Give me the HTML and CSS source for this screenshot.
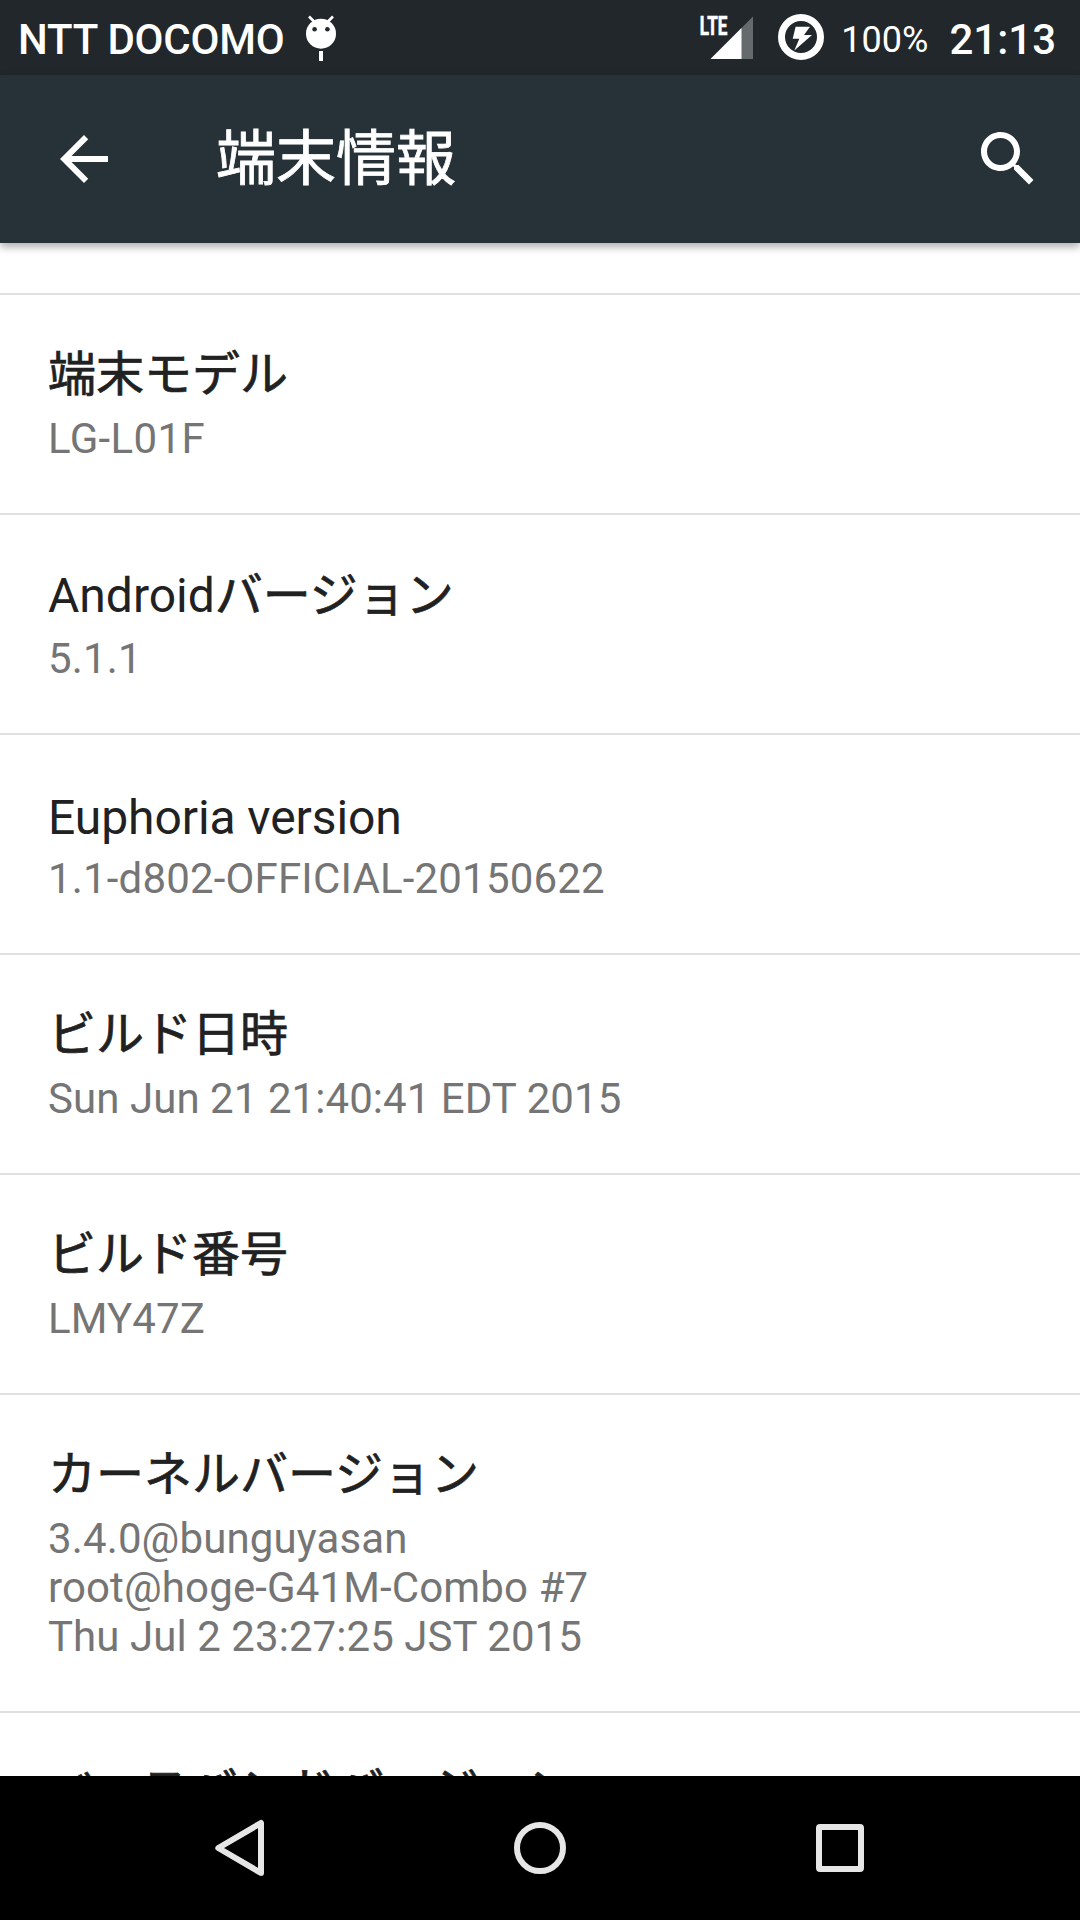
FILE: index.html
```html
<!DOCTYPE html>
<html lang="ja">
<head>
<meta charset="utf-8">
<title>端末情報</title>
<link rel="stylesheet" href="styles.css">
</head>
<body>
<div class="screen">
  <div class="status-bar">
    <span class="carrier">NTT DOCOMO</span>
    <svg class="notif-icon" width="36" height="75" viewBox="303 0 36 75">
      <circle cx="321" cy="33.7" r="15" fill="#fff"/>
      <path d="M309 16.5l6 6M333 16.5l-6 6" stroke="#fff" stroke-width="2.6"/>
      <circle cx="314.6" cy="29.3" r="2.3" fill="#21272b"/>
      <circle cx="327.4" cy="29.3" r="2.3" fill="#21272b"/>
      <path d="M319 51h4v10h-4z" fill="#fff"/>
    </svg>
    <span class="spacer"></span>
    <svg class="signal-icon" width="54" height="75" viewBox="700 0 54 75">
      <path d="M753 16.5V59H710.5z" fill="#656a6d"/>
      <path d="M741.5 28V59H710.5z" fill="#fff"/>
      <text class="lte" x="699.8" y="35.3" textLength="27.5" lengthAdjust="spacingAndGlyphs">LTE</text>
    </svg>
    <svg class="battery-icon" width="46" height="75" viewBox="778 0 46 75">
      <circle cx="801" cy="37" r="19.5" fill="none" stroke="#fff" stroke-width="7"/>
      <path d="M795.6 26.7H810L804 35H812L794.3 50.5L799.3 38.7H792.7z" fill="#fff"/>
    </svg>
    <span class="percent">100%</span>
    <span class="clock">21:13</span>
  </div>
  <header class="app-bar">
    <svg width="72" height="72" viewBox="0 0 24 24" fill="#fff"><path d="M20 11H7.83l5.59-5.59L12 4l-8 8 8 8 1.41-1.41L7.83 13H20v-2z"/></svg>
    <h1 class="page-title">端末情報</h1>
    <svg width="72" height="72" viewBox="0 0 24 24" fill="#fff"><path d="M15.5 14h-.79l-.28-.27C15.41 12.59 16 11.11 16 9.5 16 5.91 13.09 3 9.5 3S3 5.91 3 9.5 5.91 16 9.5 16c1.61 0 3.09-.59 4.23-1.57l.27.28v.79l5 4.99L20.49 19l-4.99-5zm-6 0C7.01 14 5 11.99 5 9.5S7.01 5 9.5 5 14 7.01 14 9.5 11.99 14 9.5 14z"/></svg>
  </header>
  <main class="list">
    <section class="item"><h2 class="title">端末モデル</h2><p class="summary summary-model">LG-L01F</p></section>
    <section class="item"><h2 class="title title-mixed"><span class="latin">Android</span>バージョン</h2><p class="summary">5.1.1</p></section>
    <section class="item"><h2 class="title title-latin">Euphoria version</h2><p class="summary summary-version">1.1-d802-OFFICIAL-20150622</p></section>
    <section class="item"><h2 class="title">ビルド日時</h2><p class="summary summary-date">Sun Jun 21 21:40:41 EDT 2015</p></section>
    <section class="item"><h2 class="title">ビルド番号</h2><p class="summary">LMY47Z</p></section>
    <section class="item"><h2 class="title">カーネルバージョン</h2><p class="summary">3.4.0@bunguyasan<br>root@hoge-G41M-Combo #7<br><span class="summary-date">Thu Jul 2 23:27:25 JST 2015</span></p></section>
    <section class="item"><h2 class="title title-last">ベースバンドバージョン</h2></section>
  </main>
  <nav class="nav-bar">
    <svg width="72" height="72" viewBox="204 1812 72 72"><path d="M261 1823V1873L218.3 1848z"/></svg>
    <svg width="72" height="72" viewBox="504 1812 72 72"><circle cx="540" cy="1848" r="23"/></svg>
    <svg width="72" height="72" viewBox="804 1812 72 72"><rect x="819" y="1827" width="42" height="42" rx="1"/></svg>
  </nav>
</div>
</body>
</html>
```
FILE: styles.css
```css
* { box-sizing: border-box; }
body, h1, h2, p { margin: 0; font-weight: 400; }
svg { display: block; flex: none; }

.screen {
  width: 1080px;
  height: 1920px;
  display: flex;
  flex-direction: column;
  overflow: hidden;
  background: #fff;
  font-family: Roboto, "Noto Sans CJK JP", sans-serif;
}

.status-bar {
  flex: none;
  height: 75px;
  padding: 0 24px 0 18px;
  display: flex;
  background: #21272b;
  color: #fff;
  white-space: nowrap;
}
.carrier, .clock { font-size: 42px; font-weight: 500; line-height: 80px; }
.carrier { letter-spacing: -.2px; }
.notif-icon { margin-left: 18px; }
.spacer { flex: 1; }
.lte { font: 700 26px Roboto, sans-serif; fill: #fff; stroke: #fff; stroke-width: .7px; }
.battery-icon { margin-left: 24px; }
.percent { margin-left: 17px; font-size: 36px; line-height: 80px; }
.clock { margin-left: 21px; }

.app-bar {
  flex: none;
  position: relative;
  z-index: 1;
  height: 168px;
  padding: 0 36px 0 48px;
  display: flex;
  align-items: center;
  background: #263238;
  box-shadow: 0 4px 8px rgba(0, 0, 0, .32);
}
.page-title {
  flex: 1;
  margin-left: 96px;
  padding-top: 2px;
  color: #fff;
  font-size: 60px;
  line-height: 80px;
  -webkit-text-stroke: .8px #fff;
}

.list { flex: 1; min-height: 0; overflow: hidden; padding-top: 50px; }
.item {
  border-top: 2px solid #e0e0e0;
  padding: 48px 48px 50px;
}
.title {
  height: 64px;
  color: #212121;
  font-size: 48px;
  line-height: 64px;
  white-space: nowrap;
  -webkit-text-stroke: .7px #212121;
}
.latin, .title-latin { -webkit-text-stroke: 0; }
.title-mixed { line-height: 66px; }
.title-latin { line-height: 70px; letter-spacing: -.08px; }
.title-last { line-height: 60px; }
.summary {
  margin-top: 7px;
  color: #757575;
  font-size: 42px;
  line-height: 49px;
  letter-spacing: .13px;
}
.summary-model { letter-spacing: .35px; }
.summary-version { letter-spacing: .17px; }
.summary-date { letter-spacing: .06px; }

.nav-bar {
  flex: none;
  height: 144px;
  padding: 0 90px;
  display: grid;
  grid-template-columns: repeat(3, 1fr);
  place-items: center;
  background: #000;
  fill: none;
  stroke: #e6e6e6;
  stroke-width: 6;
  stroke-linejoin: round;
}
```
